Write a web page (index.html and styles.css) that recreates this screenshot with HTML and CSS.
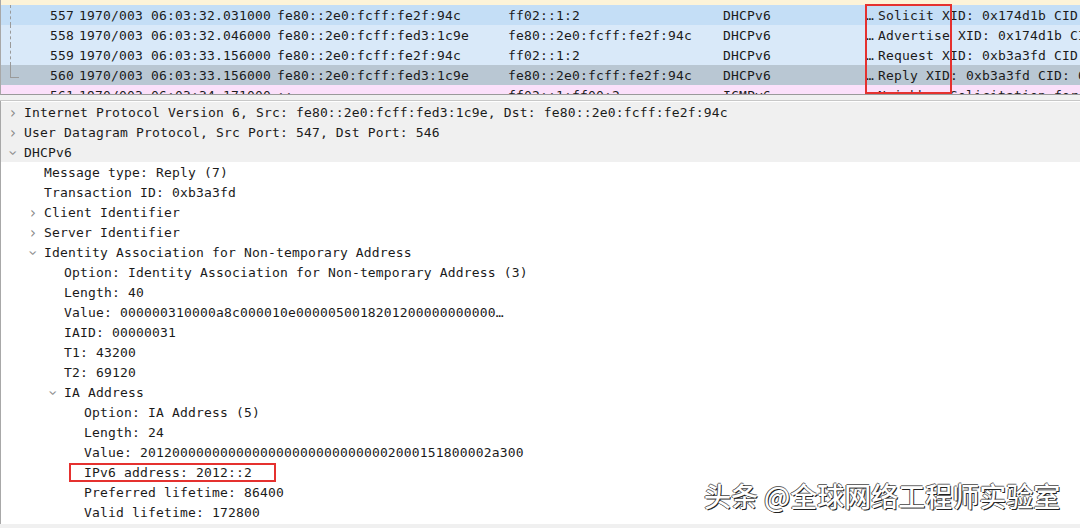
FILE: index.html
```html
<!DOCTYPE html>
<html lang="en">
<head>
    <meta charset="UTF-8">
    <title>Wireshark - DHCPv6</title>
    <link rel="stylesheet" href="styles.css">
</head>
<body>
    <div class="packet-list">
        <div class="pkt pkt-prev"></div>
        <div class="pkt pkt-solicit">
            <span class="tree tree-mid"></span>
            <span class="c-no">557</span><span class="c-time">1970/003 06:03:32.031000</span><span class="c-src">fe80::2e0:fcff:fe2f:94c</span><span class="c-dst">ff02::1:2</span><span class="c-proto">DHCPv6</span><span class="c-info"><span class="elide">…</span>Solicit XID: 0x174d1b CID</span>
        </div>
        <div class="pkt pkt-dhcp">
            <span class="tree tree-mid"></span>
            <span class="c-no">558</span><span class="c-time">1970/003 06:03:32.046000</span><span class="c-src">fe80::2e0:fcff:fed3:1c9e</span><span class="c-dst">fe80::2e0:fcff:fe2f:94c</span><span class="c-proto">DHCPv6</span><span class="c-info"><span class="elide">…</span>Advertise XID: 0x174d1b CI</span>
        </div>
        <div class="pkt pkt-dhcp">
            <span class="tree tree-mid"></span>
            <span class="c-no">559</span><span class="c-time">1970/003 06:03:33.156000</span><span class="c-src">fe80::2e0:fcff:fe2f:94c</span><span class="c-dst">ff02::1:2</span><span class="c-proto">DHCPv6</span><span class="c-info"><span class="elide">…</span>Request XID: 0xb3a3fd CID</span>
        </div>
        <div class="pkt pkt-selected">
            <span class="tree tree-end"></span>
            <span class="c-no">560</span><span class="c-time">1970/003 06:03:33.156000</span><span class="c-src">fe80::2e0:fcff:fed3:1c9e</span><span class="c-dst">fe80::2e0:fcff:fe2f:94c</span><span class="c-proto">DHCPv6</span><span class="c-info"><span class="elide">…</span>Reply XID: 0xb3a3fd CID: 0</span>
        </div>
        <div class="pkt pkt-icmp">
            <span class="tree"></span>
            <span class="c-no">561</span><span class="c-time">1970/003 06:03:34.171000</span><span class="c-src">::</span><span class="c-dst">ff02::1:ff00:2</span><span class="c-proto">ICMPv6</span><span class="c-info"><span class="elide"></span>Neighbor Solicitation for</span>
        </div>
        <div class="mark mark-info"></div>
    </div>
    <div class="splitter"></div>
    <div class="details">
        <div class="row lv0 shaded"><span class="arrow">›</span>Internet Protocol Version 6, Src: fe80::2e0:fcff:fed3:1c9e, Dst: fe80::2e0:fcff:fe2f:94c</div>
        <div class="row lv0 shaded"><span class="arrow">›</span>User Datagram Protocol, Src Port: 547, Dst Port: 546</div>
        <div class="row lv0 shaded"><span class="arrow open">›</span>DHCPv6</div>
        <div class="row lv1">Message type: Reply (7)</div>
        <div class="row lv1">Transaction ID: 0xb3a3fd</div>
        <div class="row lv1"><span class="arrow">›</span>Client Identifier</div>
        <div class="row lv1"><span class="arrow">›</span>Server Identifier</div>
        <div class="row lv1"><span class="arrow open">›</span>Identity Association for Non-temporary Address</div>
        <div class="row lv2">Option: Identity Association for Non-temporary Address (3)</div>
        <div class="row lv2">Length: 40</div>
        <div class="row lv2">Value: 000000310000a8c000010e0000050018201200000000000…</div>
        <div class="row lv2">IAID: 00000031</div>
        <div class="row lv2">T1: 43200</div>
        <div class="row lv2">T2: 69120</div>
        <div class="row lv2"><span class="arrow open">›</span>IA Address</div>
        <div class="row lv3">Option: IA Address (5)</div>
        <div class="row lv3">Length: 24</div>
        <div class="row lv3">Value: 20120000000000000000000000000002000151800002a300</div>
        <div class="row lv3"><span class="mark mark-addr">IPv6 address: 2012::2</span></div>
        <div class="row lv3">Preferred lifetime: 86400</div>
        <div class="row lv3">Valid lifetime: 172800</div>
        <div class="watermark">头条 @全球网络工程师实验室</div>
    </div>
</body>
</html>
```

FILE: styles.css
```css
body {
    margin: 0;
    width: 1080px;
    height: 528px;
    overflow: hidden;
    background: #f0f0f0;
    font-family: "DejaVu Sans Mono", "Liberation Mono", monospace;
    font-size: 13px;
    letter-spacing: 0.17px;
    color: #1b1b1b;
}
.packet-list {
    position: relative;
    height: 94px;
    overflow: hidden;
    background: #fff;
    border-left: 1px solid #a8a8a8;
    border-bottom: 1px solid #9a9a9a;
}
.pkt {
    display: flex;
    height: 20px;
    line-height: 22px;
    white-space: nowrap;
}
.pkt-prev {
    height: 5px;
    background: #fdf3d8;
}
.pkt-solicit { background: #c4def6; }
.pkt-dhcp { background: #d9e9f9; }
.pkt-selected { background: #b9c7d3; }
.pkt-icmp { background: #fbe0fa; }
.tree {
    position: relative;
    width: 20px;
    flex-shrink: 0;
}
.tree-mid::before,
.tree-end::before {
    content: "";
    position: absolute;
    left: 9px;
    top: 0;
    height: 20px;
    border-left: 1px dashed #9a9a9a;
}
.tree-end::before {
    height: 12px;
    border-left-style: solid;
}
.tree-end::after {
    content: "";
    position: absolute;
    left: 9px;
    top: 12px;
    width: 9px;
    border-top: 1px solid #9a9a9a;
}
.c-no { width: 53px; text-align: right; flex-shrink: 0; }
.c-time { width: 198px; margin-left: 5px; flex-shrink: 0; }
.c-src { width: 231px; flex-shrink: 0; }
.c-dst { width: 215px; flex-shrink: 0; }
.c-proto { width: 143px; flex-shrink: 0; }
.c-info { flex-shrink: 0; }
.elide {
    display: inline-block;
    width: 12px;
}
.splitter {
    height: 5px;
    background: #f0f0f0;
    border-bottom: 1px solid #c8c8c8;
}
.details {
    position: relative;
    height: 422px;
    background: #fff;
    border-left: 1px solid #a8a8a8;
    padding-top: 1px;
}
.row {
    position: relative;
    height: 20px;
    line-height: 22px;
    white-space: nowrap;
}
.shaded { background: #f0f0f0; }
.lv0 { padding-left: 23px; }
.lv1 { padding-left: 43px; }
.lv2 { padding-left: 63px; }
.lv3 { padding-left: 83px; }
.arrow {
    position: absolute;
    margin-left: -17px;
    width: 12px;
    text-align: center;
    color: #8a8a8a;
    font-family: "DejaVu Sans", sans-serif;
    font-size: 15px;
}
.arrow.open {
    transform: rotate(90deg);
}
.mark {
    border: 2px solid #e5312f;
}
.mark-info {
    position: absolute;
    left: 864px;
    top: 4px;
    width: 83px;
    height: 86px;
}
.mark-addr {
    display: inline-block;
    margin-left: -15px;
    margin-top: 1px;
    padding-left: 13px;
    width: 190px;
    height: 15px;
    line-height: 15px;
}
.watermark {
    position: absolute;
    left: 703px;
    top: 375px;
    font-family: "Noto Sans CJK SC", sans-serif;
    font-size: 27px;
    font-weight: 500;
    letter-spacing: 0;
    color: #fff;
    text-shadow: 1px 1px 0 #222, -1px 0 0 #555, 0 -1px 0 #666;
}
```
